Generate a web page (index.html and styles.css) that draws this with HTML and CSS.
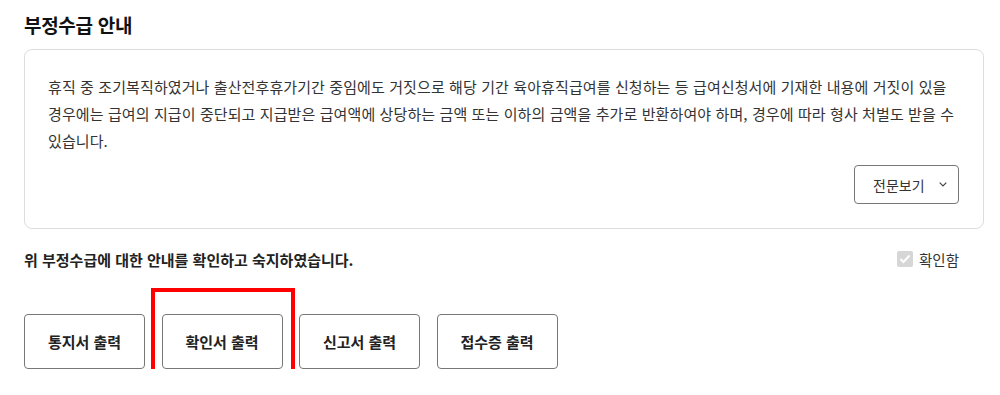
FILE: index.html
```html
<!DOCTYPE html>
<html lang="ko">
<head>
  <meta charset="UTF-8">
  <title>부정수급 안내</title>
  <link rel="stylesheet" href="styles.css">
</head>
<body>
  <div class="container">
    <h2 class="title">부정수급 안내</h2>

    <!-- notice box -->
    <div class="notice">
      <p class="notice-text">휴직 중 조기복직하였거나 출산전후휴가기간 중임에도 거짓으로 해당 기간 육아휴직급여를 신청하는 등 급여신청서에 기재한 내용에 거짓이 있을 경우에는 급여의 지급이 중단되고 지급받은 급여액에 상당하는 금액 또는 이하의 금액을 추가로 반환하여야 하며, 경우에 따라 형사 처벌도 받을 수 있습니다.</p>
      <div class="notice-foot">
        <button class="btn-more">전문보기
          <svg width="8" height="5" viewBox="0 0 8 5"><path d="M0.7 0.7 L4 4 L7.3 0.7" fill="none" stroke="#444" stroke-width="1.2"/></svg>
        </button>
      </div>
    </div>

    <!-- agree row -->
    <div class="agree">
      <strong>위 부정수급에 대한 안내를 확인하고 숙지하였습니다.</strong>
      <label class="check">
        <span class="check-box">
          <svg width="12" height="10" viewBox="0 0 12 10"><path d="M1.5 5 L4.5 8 L10.5 1.5" fill="none" stroke="#fff" stroke-width="2"/></svg>
        </span>
        확인함
      </label>
    </div>

    <!-- print buttons -->
    <div class="actions">
      <button class="btn-print">통지서 출력</button>
      <div class="marked">
        <button class="btn-print">확인서 출력</button>
        <svg class="mark-box" width="144" height="98" viewBox="0 0 144 98">
          <rect x="2" y="2" width="140" height="94" fill="none" stroke="#f00" stroke-width="4"/>
        </svg>
      </div>
      <button class="btn-print">신고서 출력</button>
      <button class="btn-print">접수증 출력</button>
    </div>
  </div>
</body>
</html>
```

FILE: styles.css
```css
* { box-sizing: border-box; }

body {
  margin: 0;
  padding: 0;
  background: #fff;
  font-family: "Noto Sans CJK KR", "Noto Sans", sans-serif;
  color: #222;
}

.container {
  width: 960px;
  margin-left: 24px;
}

.title {
  margin: 0;
  padding-top: 11px;
  font-size: 19px;
  line-height: 28px;
  font-weight: 700;
  color: #111;
  letter-spacing: -0.3px;
}

.notice {
  margin-top: 10px;
  border: 1px solid #ddd;
  border-radius: 8px;
  padding: 23px 24px 24px 23px;
}

.notice-text {
  margin: 0;
  font-size: 15px;
  line-height: 27px;
  letter-spacing: 0.1px;
  color: #333;
}

.notice-foot {
  display: flex;
  justify-content: flex-end;
  margin-top: 11px;
}

.btn-more {
  display: flex;
  align-items: center;
  gap: 14px;
  width: 105px;
  height: 39px;
  padding: 0 0 0 18px;
  border: 1px solid #777;
  border-radius: 4px;
  background: #fff;
  font-family: inherit;
  font-size: 14px;
  color: #333;
  cursor: pointer;
}

.agree {
  display: flex;
  justify-content: space-between;
  align-items: center;
  height: 30px;
  margin-top: 15px;
  padding-right: 25px;
  font-size: 15px;
  color: #222;
}

.check {
  display: flex;
  align-items: center;
  gap: 6px;
  font-size: 14.5px;
  color: #333;
}

.check-box {
  display: flex;
  align-items: center;
  justify-content: center;
  width: 16px;
  height: 16px;
  border-radius: 2px;
  background: #d6d6d6;
}

.actions {
  display: flex;
  gap: 16.5px;
  margin-top: 40px;
}

.btn-print {
  width: 121px;
  height: 55px;
  border: 1px solid #777;
  border-radius: 4px;
  background: #fff;
  font-family: inherit;
  font-size: 15px;
  font-weight: 700;
  color: #222;
  cursor: pointer;
}

.marked {
  position: relative;
}

/* red highlight drawn over the button */
.mark-box {
  position: absolute;
  left: -11px;
  top: -26px;
  pointer-events: none;
}
```
